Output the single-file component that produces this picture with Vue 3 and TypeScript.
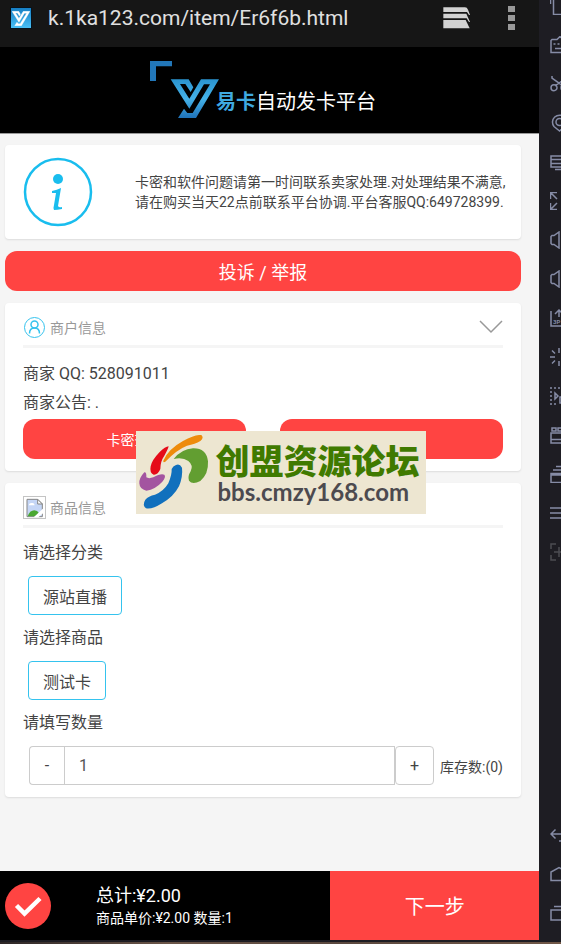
<script setup lang="ts">
import { computed, ref } from 'vue'

interface Tool {
  name: string
  path: string
  dim?: boolean
  label?: string
}

const tools: Tool[] = [
  { name: '旋转', path: 'M.5 1v6M3.500 1v16.500H15V1' },
  { name: '键盘', path: 'M1 4.500l1-1h5L10 .500l3 3H17V16.500H1zM3.500 8h2M7.500 8h2M12 8h2M5 12.500h9' },
  { name: '剪切', path: 'M2 1v2l11 8M16 1v2L5 11M1 12.700a3 3 0 1 0 6 0a3 3 0 1 0-6 0M11 12.700a3 3 0 1 0 6 0a3 3 0 1 0-6 0' },
  { name: '定位', path: 'M9.500 17L4 12.500a7 7 0 1 1 11 0zM6 8a3.500 3.500 0 1 0 7 0a3.500 3.500 0 1 0-7 0' },
  { name: '显示', path: 'M1 3h16v11H1zM1 6.500h16M1 10.500h16M5 16.500h8' },
  { name: '全屏', path: 'M.5 7V.500H7M1 1l6 6M.5 11v6.500H7M1 17l6-6M11 .500h6.500V7M11 17.500h6.500V11' },
  { name: '音量加', path: 'M1 5.500L2 4.500h2L9 1V17L4 13.500H2L1 12.500z' },
  { name: '音量减', path: 'M1 5.500L2 4.500h2L9 1V17L4 13.500H2L1 12.500z' },
  { name: '安装', path: 'M1 2v15h16V2M9 8V1M5 5l4-4 4 4', label: '3P' },
  { name: '加载', path: 'M0 9h5M9 0v5M9 13v5M2 2.500l3 3M2 15.500l3-3M13 9h5M16 2.500l-3 3M16 15.500l-3-3' },
  { name: '脚本', path: 'M0 1h2M4 1h2M8 1h2M12 1h2M0 5h2M0 9h2M0 13h2M0 17h2M4 17h2M5 6v6l3-3zM10 10h5v6h-5z' },
  { name: '录制', path: 'M1 7h16v10H1zM1 13.500h16M2 2h4v3H2zM8 2h4v3H8z' },
  { name: '多开', path: 'M1 8.500h16V17.500H1zM1 10h16M3 5h13M6 1.500h10' },
  { name: '菜单', path: 'M0 4h18M0 9h18M0 14h18' },
  { name: '添加', path: 'M1 6V1h5M1 12v5h5M12 1h5v5M12 17h5v-5M4 9h10M9 4v10', dim: true }
]

const systemKeys: Tool[] = [
  { name: '返回', path: 'M1 8h11q5 0 5 4t-5 3H9M5.500 3.500L1 8l4.500 4.500' },
  { name: '主页', path: 'M1 15.500V7l8-4.500L17 7v8.500z' },
  { name: '最近任务', path: 'M1 6h13v10H1zM4 2.500h13V13' }
]

const yPath =
  'M512 238H566L580 262L572 276L556 252H540L568 296L603 238H657L588 354H534L552 326L562 339H578L630 253H612L568 326Z'

const price = 2
const quantity = ref<number>(1)
const stock = 0
const total = computed<string>(() => (price * quantity.value).toFixed(2))

function decrease(): void {
  if (quantity.value > 1) quantity.value--
}
function increase(): void {
  quantity.value++
}
</script>

<template>
  <div class="window">
    <div class="workspace">
      <div class="screen">
        <div class="urlbar">
          <svg class="favicon" viewBox="0 0 22 22" aria-hidden="true">
            <defs>
              <linearGradient id="fav" x1="0" y1="0" x2="0" y2="1">
                <stop offset="0" stop-color="#167fc4" />
                <stop offset="1" stop-color="#49bff5" />
              </linearGradient>
            </defs>
            <rect width="22" height="22" rx="1" fill="#08121a" />
            <rect x="1" y="1" width="20" height="20" fill="url(#fav)" />
            <svg x="2" y="4" width="18" height="15" viewBox="512 238 145 116">
              <path :d="yPath" fill="#fff" stroke="#fff" stroke-width="3" />
            </svg>
          </svg>
          <span class="url">k.1ka123.com/item/Er6f6b.html</span>
          <button class="bar-btn" type="button" aria-label="标签页">
            <svg width="28" height="22" viewBox="0 0 84 66" fill="#d2d2d2">
              <path d="M1 1H66Q72 1 75 8L81 24H78L72 15H1Z" />
              <path d="M1 20H70L81 45H78L71 34H1Z" />
              <path d="M1 39H68L80 64H1Z" />
            </svg>
          </button>
          <button class="bar-btn" type="button" aria-label="更多">
            <svg width="7" height="24" viewBox="0 0 7 24" fill="#999">
              <path d="M0 0h7v6H0zM0 9h7v6H0zM0 18h7v6H0z" />
            </svg>
          </button>
        </div>

        <header class="brand">
          <svg class="logo" viewBox="450 180 210 177" aria-hidden="true">
            <defs>
              <linearGradient id="logo" x1="0" y1="0" x2="0" y2="1">
                <stop offset="0" stop-color="#2a94d0" />
                <stop offset=".5" stop-color="#45b2e8" />
                <stop offset="1" stop-color="#1f72b8" />
              </linearGradient>
            </defs>
            <path d="M450 183H516V199H468V243H450Z" fill="#2277b9" />
            <path :d="yPath" fill="url(#logo)" />
          </svg>
          <h1><b>易卡</b>自动发卡平台</h1>
        </header>

        <main>
          <section class="card notice">
            <svg class="info" viewBox="0 0 70 70" fill="#19bdee" aria-hidden="true">
              <circle cx="35" cy="35" r="33" fill="none" stroke="#19bdee" stroke-width="2.5" />
              <circle cx="35" cy="22" r="5" />
              <path d="M29 34Q34 33 38 31L35 49Q36 51 39 50V52Q34 53 31 53Q30 51 31 48L33 36H29Z" />
            </svg>
            <p>卡密和软件问题请第一时间联系卖家处理.对处理结果不满意,<br />请在购买当天22点前联系平台协调.平台客服QQ:649728399.</p>
          </section>

          <button class="red report" type="button">投诉 / 举报</button>

          <section class="card">
            <div class="card-head">
              <svg class="head-icon" viewBox="0 0 23 23" fill="none" stroke="#35c3ee" aria-hidden="true">
                <circle cx="11.5" cy="11.5" r="10" />
                <circle cx="11.5" cy="8.500" r="3.500" stroke-width="1.5" />
                <path d="M6.500 17.500Q6.500 12 11.500 12T16.500 17.500" stroke-width="1.5" />
              </svg>
              <h2>商户信息</h2>
              <button class="fold" type="button" aria-label="收起">
                <svg width="24" height="14" viewBox="0 0 24 14" fill="none" stroke="#999" stroke-width="1.5">
                  <path d="M1 1L12 12L23 1" />
                </svg>
              </button>
            </div>
            <div class="merchant">
              <p>商家 QQ: 528091011</p>
              <p>商家公告: .</p>
              <div class="pair">
                <button class="red" type="button">卡密查询</button>
                <button class="red" type="button" aria-label="联系商家"></button>
              </div>
            </div>
          </section>

          <section class="card">
            <div class="card-head">
              <svg class="head-icon" viewBox="0 0 69 69" aria-hidden="true">
                <rect x="1.5" y="1.5" width="66" height="66" fill="#fff" stroke="#c4c4c4" stroke-width="3" />
                <path d="M12 10H44L58 24V62H12Z" fill="#c5d6f6" stroke="#858585" stroke-width="3" />
                <path d="M44 10V24H58Z" fill="#fff" stroke="#858585" stroke-width="3" />
                <path d="M17 28Q20 19 27 21Q34 20 35 28Z" fill="#fff" />
                <path d="M14 61Q20 43 34 43Q43 43 48 51L38 61Z" fill="#4aa832" />
                <path d="M32 64L62 36V50L46 64Z" fill="#fff" />
              </svg>
              <h2>商品信息</h2>
            </div>
            <div class="form">
              <h3>请选择分类</h3>
              <button class="choice" type="button">源站直播</button>
              <h3>请选择商品</h3>
              <button class="choice" type="button">测试卡</button>
              <h3><label for="qty">请填写数量</label></h3>
              <div class="stepper">
                <button class="minus" type="button" aria-label="减少" @click="decrease">-</button>
                <input id="qty" v-model.number="quantity" type="text" inputmode="numeric" />
                <button class="plus" type="button" aria-label="增加" @click="increase">+</button>
                <span>库存数:({{ stock }})</span>
              </div>
            </div>
          </section>
        </main>

        <footer class="checkout">
          <div class="summary">
            <svg class="tick" viewBox="0 0 46 46" aria-hidden="true">
              <circle cx="23" cy="23" r="23" fill="#ff4442" />
              <path d="M11.500 22.500L19.500 30.500L35 15.500" fill="none" stroke="#fff" stroke-width="4.500" />
            </svg>
            <div>
              <p class="total">总计:¥{{ total }}</p>
              <p class="unit">商品单价:¥{{ price.toFixed(2) }} 数量:{{ quantity }}</p>
            </div>
          </div>
          <button class="next" type="button">下一步</button>
        </footer>
      </div>

      <aside class="rail">
        <div class="rail-group tools">
          <button v-for="tool in tools" :key="tool.name" type="button" :class="{ dim: tool.dim }" :aria-label="tool.name">
            <svg viewBox="0 0 18 18">
              <path :d="tool.path" />
              <text v-if="tool.label" x="3" y="15">{{ tool.label }}</text>
            </svg>
          </button>
        </div>
        <div class="rail-group">
          <button v-for="key in systemKeys" :key="key.name" type="button" :aria-label="key.name">
            <svg viewBox="0 0 18 18"><path :d="key.path" /></svg>
          </button>
        </div>
      </aside>
    </div>
    <div class="desktop-edge"></div>

    <div class="watermark">
      <svg viewBox="0 0 210 225" aria-hidden="true">
        <path d="M73 77Q88 42 132 18Q170-2 187 0Q196 8 184 18Q169 28 144 32Q113 44 79 80Q72 84 73 77Z" fill="#ee8b0b" />
        <path d="M89 34Q87 43 76 62Q64 79 64 102Q57 120 44 119Q31 114 35 94Q38 76 62 51Q79 35 89 34Z" fill="#e50b19" />
        <path d="M104 72Q128 42 162 40Q202 39 207 79Q209 117 184 138Q160 150 150 137Q145 125 155 109Q164 91 148 78Q131 66 104 72Z" fill="#629e31" />
        <path d="M16 112Q23 111 22 127Q29 132 43 127Q64 115 76 119Q82 125 70 140Q49 163 22 167Q2 163 1 145Q0 129 16 112Z" fill="#a354a0" />
        <path d="M111 90Q122 85 129 98Q132 124 120 154Q104 185 69 205Q39 224 21 220Q9 210 19 194Q28 183 48 179Q73 170 88 145Q99 119 98 102Q102 93 111 90Z" fill="#1170bd" />
      </svg>
      <div class="forum">
        <strong>创盟资源论坛</strong>
        <span>bbs.cmzy168.com</span>
      </div>
    </div>
  </div>
</template>

<style>
body {
  margin: 0;
  background: #1e1d23;
}
</style>

<style scoped>
* {
  box-sizing: border-box;
}
h1, h2, h3, p {
  margin: 0;
  font-weight: 400;
}
button, input {
  font: inherit;
  color: inherit;
  margin: 0;
  padding: 0;
  border: 0;
  background: none;
}
button {
  cursor: pointer;
}
svg {
  display: block;
  flex: none;
}
.window {
  position: relative;
  display: flex;
  flex-direction: column;
  min-height: 100vh;
  overflow: hidden;
  font-family: Roboto, "Noto Sans CJK SC", sans-serif;
  font-size: 16px;
  color: #444;
}
.workspace {
  flex: 1;
  display: grid;
  grid-template-columns: minmax(0, 1fr) 22px;
}
.screen {
  display: flex;
  flex-direction: column;
  background: #f5f5f5;
}
.urlbar {
  display: flex;
  align-items: center;
  height: 47px;
  padding: 0 24px 12px 10px;
  background: #161616;
  color: #e0e0e0;
}
.favicon {
  width: 22px;
  height: 22px;
}
.url {
  flex: 1;
  margin-left: 16px;
  font-size: 21px;
  line-height: 28px;
  white-space: nowrap;
}
.bar-btn + .bar-btn {
  margin-left: 37px;
}
.brand {
  display: flex;
  align-items: flex-end;
  justify-content: center;
  height: 87px;
  padding: 0 18px 14px 5px;
  background: #000;
  border-bottom: 1px solid #999;
}
.logo {
  width: 70px;
  height: 59px;
}
.brand h1 {
  margin-left: -4px;
  color: #fff;
  font-size: 20px;
  line-height: 34px;
}
.brand b {
  color: #3fa9e0;
}
main {
  flex: 1;
  display: flex;
  flex-direction: column;
  gap: 12px;
  padding: 11px 18px 12px 5px;
}
.card {
  padding: 0 18px;
  background: #fff;
  border-radius: 4px;
  box-shadow: 0 1px 2px rgba(0, 0, 0, .1);
}
.notice {
  display: flex;
  align-items: center;
  gap: 42px;
  min-height: 94px;
  padding-right: 8px;
}
.info {
  width: 70px;
  height: 70px;
}
.notice p {
  font-size: 14px;
  line-height: 20px;
}
.red {
  height: 40px;
  border-radius: 12px;
  background: #ff4442;
  color: #fff;
  font-size: 14px;
}
.report {
  font-size: 18px;
}
.card-head {
  display: flex;
  align-items: center;
  gap: 4px;
  height: 45px;
  padding-top: 6px;
  border-bottom: 3px solid #f5f5f5;
}
.head-icon {
  width: 23px;
  height: 23px;
}
.card-head h2 {
  flex: 1;
  font-size: 14px;
  color: #999;
}
.merchant {
  padding: 11px 0 12px;
}
.merchant p {
  line-height: 29px;
}
.pair {
  display: grid;
  grid-template-columns: 1fr 1fr;
  gap: 34px;
  padding-top: 2px;
}
.form {
  padding: 12px 0 12px;
}
.form h3 {
  font-size: 16px;
  line-height: 26px;
}
.choice {
  display: block;
  height: 39px;
  margin: 10px 5px;
  padding: 0 14px;
  border: 1px solid #35c3ee;
  border-radius: 4px;
}
.stepper {
  display: flex;
  align-items: center;
  height: 39px;
  margin: 10px 0 0 6px;
}
.stepper button,
.stepper input {
  height: 39px;
  border: 1px solid #ccc;
}
.stepper .minus {
  width: 35px;
  border-right: 0;
  border-radius: 4px 0 0 4px;
}
.stepper input {
  flex: 1;
  min-width: 0;
  padding: 0 14px;
  color: #555;
}
.stepper .plus {
  width: 39px;
  border-radius: 4px;
}
.stepper span {
  margin-left: 6px;
  font-size: 14px;
}
.checkout {
  display: grid;
  grid-template-columns: 19fr 12fr;
  height: 69px;
  background: #000;
  color: #fff;
}
.summary {
  display: flex;
  align-items: center;
  gap: 45px;
  padding-left: 5px;
}
.tick {
  width: 46px;
  height: 46px;
}
.total {
  font-size: 18px;
  line-height: 24px;
}
.unit {
  font-size: 14px;
  line-height: 20px;
}
.next {
  background: #ff4442;
  font-size: 20px;
}
.rail {
  display: flex;
  flex-direction: column;
  justify-content: space-between;
  overflow: hidden;
  padding-bottom: 8px;
  background: #1e1d23;
}
.rail-group {
  display: flex;
  flex-direction: column;
}
.tools {
  margin-top: -14px;
}
.rail button {
  height: 39px;
  padding-left: 11px;
  color: #868ca6;
}
.rail .dim {
  color: #4c4c52;
}
.rail svg {
  width: 18px;
  height: 18px;
  fill: none;
  stroke: currentColor;
  stroke-width: 1.5;
}
.rail text {
  fill: currentColor;
  stroke: none;
  font-size: 6px;
  font-weight: 700;
}
.desktop-edge {
  height: 4px;
  border-top: 2px solid #1e1d23;
  background: linear-gradient(90deg, #2c2626, #6b5548 30%, #5a483e 60%, #705747);
}
.watermark {
  position: absolute;
  inset: 0;
  width: 290px;
  height: 83px;
  margin: auto;
  display: flex;
  align-items: center;
  padding-left: 3px;
  background: #ede6d1;
}
.watermark svg {
  width: 70px;
  height: 75px;
}
.forum {
  display: flex;
  flex-direction: column;
  margin-left: 7px;
  padding-top: 3px;
  white-space: nowrap;
}
.forum strong {
  color: #407a00;
  font-size: 34px;
  line-height: 36px;
  font-weight: 900;
}
.forum span {
  margin-left: 2px;
  color: #4c4a4f;
  font-family: Lato, sans-serif;
  font-size: 24px;
  line-height: 24px;
  font-weight: 700;
}
</style>
